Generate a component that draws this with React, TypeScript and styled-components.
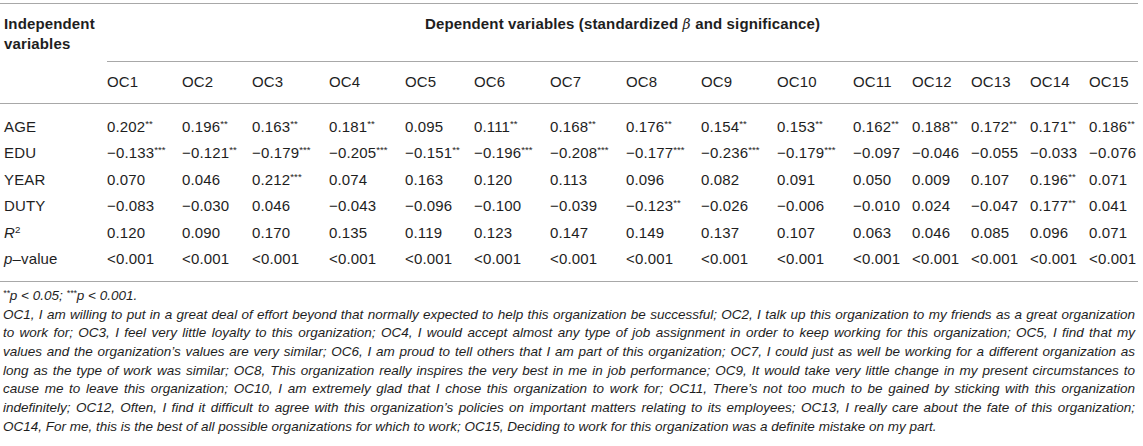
import React from 'react';
import styled, {createGlobalStyle} from "styled-components";

const GlobalStyle = createGlobalStyle`
  body {
    margin: 0;
    background: #fff;
    font-family: "Liberation Sans", Arial, sans-serif;
    color: #1e1e1e;
  }
`

const Page = styled.div`
  width: 1138px;
  padding-top: 3px;
`

const Table = styled.table`
  width: 1138px;
  table-layout: fixed;
  border-collapse: collapse;
  border-top: 1px solid #a8a8a8;
  border-bottom: 1px solid #a8a8a8;
  font-size: 15px;
  letter-spacing: 0.15px;
`

const RowHead = styled.th`
  text-align: left;
  vertical-align: top;
  font-weight: bold;
  line-height: 20px;
  padding: 10px 0 0 4px;
  border-bottom: 1px solid #a8a8a8;
`

const GroupHead = styled.th`
  text-align: center;
  vertical-align: top;
  font-weight: bold;
  line-height: 20px;
  padding: 10px 0 27px;
  border-bottom: 1px solid #a8a8a8;
`

const ColHead = styled.th`
  text-align: left;
  font-weight: normal;
  line-height: 20px;
  padding: 10px 0 11px;
  border-bottom: 1px solid #a8a8a8;
`

const Row = styled.tr<{ first?: boolean, last?: boolean }>`
  & > td {
    padding-top: ${({first}) => first ? '13px' : '3.2px'};
    padding-bottom: ${({last}) => last ? '12px' : '3.2px'};
  }
`

const Cell = styled.td<{ label?: boolean }>`
  line-height: 20px;
  white-space: nowrap;
  padding-left: ${({label}) => label ? '4px' : '0'};
`

const Sup = styled.span`
  font-size: 0.65em;
  line-height: 0;
  vertical-align: 0.5em;
  letter-spacing: 0;
`

const Ital = styled.i`
  font-style: italic;
`

const Beta = styled.i`
  font-family: "DejaVu Serif", serif;
  font-style: italic;
  font-weight: normal;
  font-size: 14px;
`

const Notes = styled.div`
  padding-top: 5px;
  font-size: 13.5px;
  font-style: italic;
  line-height: 18.7px;
  color: #1e1e1e;
`

const NoteLine = styled.span<{ last?: boolean }>`
  display: block;
  white-space: nowrap;
  text-align: justify;
  text-align-last: ${({last}) => last ? 'left' : 'justify'};
  padding-left: 3px;
  padding-right: 3px;
`

const widths = [107, 75, 70, 77, 76, 69, 76, 76, 75, 76, 76, 59, 59, 59, 59, 49];

const rows: { label: React.ReactNode, values: string[] }[] = [
  {label: 'AGE', values: ['0.202**', '0.196**', '0.163**', '0.181**', '0.095', '0.111**', '0.168**', '0.176**', '0.154**', '0.153**', '0.162**', '0.188**', '0.172**', '0.171**', '0.186**']},
  {label: 'EDU', values: ['−0.133***', '−0.121**', '−0.179***', '−0.205***', '−0.151**', '−0.196***', '−0.208***', '−0.177***', '−0.236***', '−0.179***', '−0.097', '−0.046', '−0.055', '−0.033', '−0.076']},
  {label: 'YEAR', values: ['0.070', '0.046', '0.212***', '0.074', '0.163', '0.120', '0.113', '0.096', '0.082', '0.091', '0.050', '0.009', '0.107', '0.196**', '0.071']},
  {label: 'DUTY', values: ['−0.083', '−0.030', '0.046', '−0.043', '−0.096', '−0.100', '−0.039', '−0.123**', '−0.026', '−0.006', '−0.010', '0.024', '−0.047', '0.177**', '0.041']},
  {label: <><Ital>R</Ital><Sup>2</Sup></>, values: ['0.120', '0.090', '0.170', '0.135', '0.119', '0.123', '0.147', '0.149', '0.137', '0.107', '0.063', '0.046', '0.085', '0.096', '0.071']},
  {label: <><Ital>p</Ital>–value</>, values: Array(15).fill('<0.001')},
];

const noteLines = [
  'OC1, I am willing to put in a great deal of effort beyond that normally expected to help this organization be successful; OC2, I talk up this organization to my friends as a great organization',
  'to work for; OC3, I feel very little loyalty to this organization; OC4, I would accept almost any type of job assignment in order to keep working for this organization; OC5, I find that my',
  'values and the organization’s values are very similar; OC6, I am proud to tell others that I am part of this organization; OC7, I could just as well be working for a different organization as',
  'long as the type of work was similar; OC8, This organization really inspires the very best in me in job performance; OC9, It would take very little change in my present circumstances to',
  'cause me to leave this organization; OC10, I am extremely glad that I chose this organization to work for; OC11, There’s not too much to be gained by sticking with this organization',
  'indefinitely; OC12, Often, I find it difficult to agree with this organization’s policies on important matters relating to its employees; OC13, I really care about the fate of this organization;',
  'OC14, For me, this is the best of all possible organizations for which to work; OC15, Deciding to work for this organization was a definite mistake on my part.',
];

const Value = ({text}: { text: string }) => {
  const match = text.match(/^(.*?)(\*+)$/);
  if (!match) return <>{text}</>;
  return <>{match[1]}<Sup>{match[2]}</Sup></>;
}

const App = () => {
  return (
    <Page>
      <GlobalStyle/>
      <Table>
        <colgroup>
          {widths.map((w, i) => <col key={i} style={{width: w}}/>)}
        </colgroup>
        <thead>
          <tr>
            <RowHead rowSpan={2}>Independent<br/>variables</RowHead>
            <GroupHead colSpan={15}>
              Dependent variables (standardized <Beta>β</Beta> and significance)
            </GroupHead>
          </tr>
          <tr>
            {widths.slice(1).map((_, i) => <ColHead key={i}>OC{i + 1}</ColHead>)}
          </tr>
        </thead>
        <tbody>
          {rows.map((row, r) => (
            <Row key={r} first={r === 0} last={r === rows.length - 1}>
              <Cell label>{row.label}</Cell>
              {row.values.map((v, i) => <Cell key={i}><Value text={v}/></Cell>)}
            </Row>
          ))}
        </tbody>
      </Table>
      <Notes>
        <NoteLine last><Sup>**</Sup>p &lt; 0.05; <Sup>***</Sup>p &lt; 0.001.</NoteLine>
        {noteLines.map((line, i) => (
          <NoteLine key={i} last={i === noteLines.length - 1}>{line}</NoteLine>
        ))}
      </Notes>
    </Page>
  );
};

export default App;
